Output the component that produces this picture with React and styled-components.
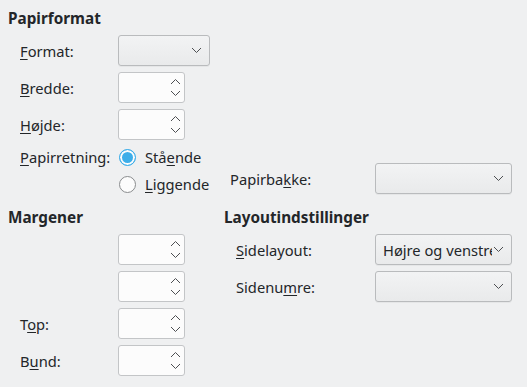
import React from 'react';
import styled, { createGlobalStyle } from 'styled-components';

const GlobalStyle = createGlobalStyle`
  html, body {
    margin: 0;
    padding: 0;
    background: #eff0f1;
  }
  body {
    font-family: "Noto Sans", "DejaVu Sans", sans-serif;
    font-size: 14.7px;
    color: #232629;
  }
`;

const Page = styled.div`
  width: 527px;
  height: 387px;
  box-sizing: border-box;
  padding: 8px 0 0 8px;
  display: flex;
  flex-direction: column;
`;

const Heading = styled.div`
  font-weight: 700;
  font-size: 15.3px;
  height: 20px;
  line-height: 20px;
`;

const Section = styled.div`
  display: flex;
  flex-direction: column;
  gap: 6px;
  padding-left: 12px;
  margin-top: ${(p) => p.$top || 0}px;
`;

const Row = styled.div`
  display: flex;
  align-items: center;
  height: 31px;
`;

const Label = styled.div`
  width: ${(p) => p.$width || 98}px;
  flex-shrink: 0;
  white-space: nowrap;
`;

const U = styled.span`
  text-decoration: underline;
  text-underline-offset: 2px;
`;

const Combo = styled.div`
  width: ${(p) => p.$width || 92}px;
  height: 31px;
  box-sizing: border-box;
  border: 1px solid #b9bbbd;
  border-radius: 3px;
  background: linear-gradient(#f2f3f4, #e9eaeb);
  display: flex;
  align-items: center;
  padding: 0 7px 0 7px;
  overflow: hidden;
  gap: 1px;
  box-shadow: 0 1px 0 rgba(0, 0, 0, 0.04);
`;

const ComboText = styled.span`
  flex: 1;
  white-space: nowrap;
  overflow: hidden;
`;

const Spin = styled.div`
  width: 67px;
  height: 31px;
  box-sizing: border-box;
  border: 1px solid #c3c5c7;
  border-radius: 3px;
  background: #fcfcfc;
  display: flex;
  align-items: center;
  justify-content: flex-end;
  padding-right: 2px;
`;

const Chevron = ({ up }) => (
  <svg width="11" height="7" viewBox="0 0 11 7" style={{ flexShrink: 0 }}>
    <path
      d={up ? 'M1 6 L5.5 1.5 L10 6' : 'M1 1 L5.5 5.5 L10 1'}
      fill="none"
      stroke="#4d4f52"
      strokeWidth="1"
    />
  </svg>
);

const SpinArrows = styled.div`
  display: flex;
  flex-direction: column;
  gap: 5px;
  margin-right: 1px;
`;

const SpinBox = () => (
  <Spin>
    <SpinArrows>
      <Chevron up />
      <Chevron />
    </SpinArrows>
  </Spin>
);

const ComboBox = ({ width, children }) => (
  <Combo $width={width}>
    <ComboText>{children}</ComboText>
    <Chevron />
  </Combo>
);

const OrientRow = styled.div`
  display: flex;
  align-items: flex-start;
  margin-top: 2px;
`;

const OrientMain = styled.div`
  display: flex;
  align-items: flex-start;
  width: 204px;
  flex-shrink: 0;
`;

const OrientLabel = styled(Label)`
  height: 18px;
  line-height: 18px;
`;

const RadioList = styled.div`
  display: flex;
  flex-direction: column;
  gap: 9px;
`;

const RadioRow = styled.div`
  display: flex;
  align-items: center;
  gap: 9px;
  height: 18px;
  white-space: nowrap;
`;

const RadioCircle = styled.span`
  width: 17px;
  height: 17px;
  flex-shrink: 0;
  box-sizing: border-box;
  border-radius: 50%;
  border: 1px solid ${(p) => (p.$checked ? '#3daee9' : '#8a8c8e')};
  background: ${(p) => (p.$checked ? '#3daee9' : '#fcfcfc')};
  box-shadow: ${(p) => (p.$checked ? 'inset 0 0 0 2px #fcfcfc' : 'none')};
  margin-left: 1px;
`;

const TrayGroup = styled.div`
  display: flex;
  align-items: center;
  align-self: flex-end;
  padding-left: 6px;
  margin-bottom: -1px;
`;

const Bottom = styled.div`
  display: flex;
  margin-top: 14px;
`;

const Column = styled.div`
  display: flex;
  flex-direction: column;
  width: ${(p) => p.$width}px;
`;

const Stack = styled.div`
  display: flex;
  flex-direction: column;
  gap: 6px;
  margin-top: 7px;
  padding-left: ${(p) => p.$indent}px;
`;

export default function App() {
  return (
    <>
      <GlobalStyle />
      <Page>
        <Heading>Papirformat</Heading>
        <Section $top={7}>
          <Row>
            <Label><U>F</U>ormat:</Label>
            <ComboBox />
          </Row>
          <Row>
            <Label><U>B</U>redde:</Label>
            <SpinBox />
          </Row>
          <Row>
            <Label><U>H</U>øjde:</Label>
            <SpinBox />
          </Row>
          <OrientRow>
            <OrientMain>
              <OrientLabel><U>P</U>apirretning:</OrientLabel>
              <RadioList>
                <RadioRow>
                  <RadioCircle $checked />
                  <span>Stå<U>e</U>nde</span>
                </RadioRow>
                <RadioRow>
                  <RadioCircle />
                  <span><U>L</U>iggende</span>
                </RadioRow>
              </RadioList>
            </OrientMain>
            <TrayGroup>
              <Label $width={145}>Papirba<U>k</U>ke:</Label>
              <ComboBox width={137} />
            </TrayGroup>
          </OrientRow>
        </Section>
        <Bottom>
          <Column $width={216}>
            <Heading>Margener</Heading>
            <Stack $indent={12}>
              <Row>
                <Label />
                <SpinBox />
              </Row>
              <Row>
                <Label />
                <SpinBox />
              </Row>
              <Row>
                <Label>T<U>o</U>p:</Label>
                <SpinBox />
              </Row>
              <Row>
                <Label>B<U>u</U>nd:</Label>
                <SpinBox />
              </Row>
            </Stack>
          </Column>
          <Column $width={295}>
            <Heading>Layoutindstillinger</Heading>
            <Stack $indent={12}>
              <Row>
                <Label $width={139}><U>S</U>idelayout:</Label>
                <ComboBox width={137}>Højre og venstre</ComboBox>
              </Row>
              <Row>
                <Label $width={139}>Sidenu<U>m</U>re:</Label>
                <ComboBox width={137} />
              </Row>
            </Stack>
          </Column>
        </Bottom>
      </Page>
    </>
  );
}
